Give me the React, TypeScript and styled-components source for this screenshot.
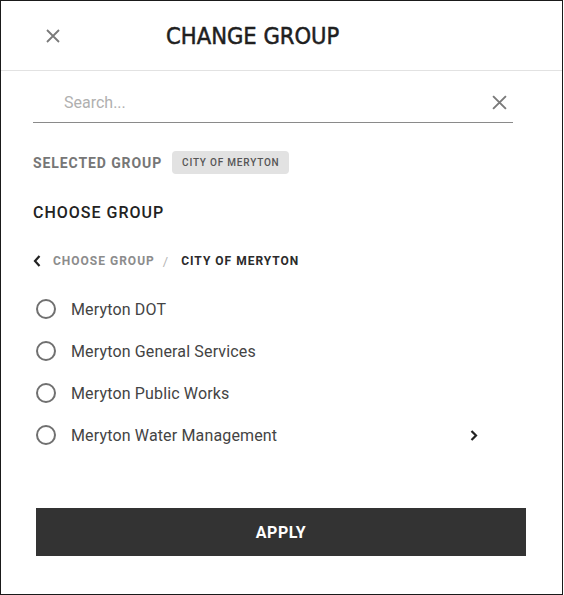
import styled, { createGlobalStyle } from 'styled-components';

const GlobalStyle = createGlobalStyle`
  html, body {
    margin: 0;
    padding: 0;
    background: #ffffff;
  }
  * {
    box-sizing: border-box;
  }
`;

const Frame = styled.div`
  width: 563px;
  height: 595px;
  border: 1px solid #1a1a1a;
  background: #ffffff;
  display: flex;
  flex-direction: column;
  font-family: Roboto, 'Liberation Sans', sans-serif;
`;

const Header = styled.header`
  height: 70px;
  flex-shrink: 0;
  display: flex;
  align-items: center;
  padding-left: 45px;
  border-bottom: 1px solid #e2e2e2;
`;

const IconButton = styled.button`
  display: flex;
  align-items: center;
  justify-content: center;
  padding: 0;
  border: none;
  background: none;
  cursor: pointer;
  color: #7a7a7a;
`;

const Title = styled.h1`
  margin: 0 0 0 106px;
  font-family: 'DejaVu Sans Condensed', 'DejaVu Sans', sans-serif;
  font-size: 23.5px;
  font-weight: 400;
  letter-spacing: 0;
  color: #1f1f1f;
  -webkit-text-stroke: 0.5px #1f1f1f;
`;

const Body = styled.div`
  display: flex;
  flex-direction: column;
  padding: 0 49px 0 32px;
`;

const SearchField = styled.div`
  margin-top: 12px;
  height: 40px;
  display: flex;
  align-items: center;
  border-bottom: 1px solid #8a8a8a;
  padding-right: 6px;
`;

const SearchInput = styled.input`
  flex: 1;
  border: none;
  outline: none;
  background: transparent;
  padding: 0 0 0 31px;
  font-family: Roboto, 'Liberation Sans', sans-serif;
  font-size: 16px;
  color: #333;

  &::placeholder {
    color: #b0b0b0;
  }
`;

const SelectedRow = styled.div`
  margin-top: 28px;
  display: flex;
  align-items: center;
  gap: 10px;
  height: 23px;
`;

const Label = styled.span`
  font-size: 14px;
  font-weight: 700;
  letter-spacing: 0.9px;
  color: #767676;
`;

const Chip = styled.span`
  display: inline-flex;
  align-items: center;
  height: 23px;
  padding: 0 9px 0 10px;
  border-radius: 4px;
  background: #e2e2e2;
  font-size: 10px;
  font-weight: 500;
  letter-spacing: 0.8px;
  color: #555555;
`;

const SectionTitle = styled.h2`
  margin: 29px 0 0;
  font-size: 16px;
  line-height: 20px;
  font-weight: 500;
  letter-spacing: 1px;
  color: #222222;
`;

const Breadcrumb = styled.nav`
  margin-top: 28px;
  height: 20px;
  display: flex;
  align-items: center;
  font-size: 12px;
  font-weight: 700;
  letter-spacing: 1px;
`;

const Crumb = styled.span<{ $current?: boolean }>`
  color: ${(p) => (p.$current ? '#2b2b2b' : '#8c8c8c')};
`;

const Slash = styled.span`
  margin: 0 12px 0 8px;
  font-weight: 400;
  font-size: 13px;
  color: #b5b5b5;
`;

const BackIcon = styled.span`
  display: flex;
  margin-right: 12px;
  color: #222;
`;

const List = styled.ul`
  list-style: none;
  margin: 17px 0 0;
  padding: 0;
`;

const Row = styled.li`
  height: 42px;
  display: flex;
  align-items: center;
  padding-right: 35px;
`;

const Radio = styled.span`
  width: 20px;
  height: 20px;
  margin-left: 3px;
  border: 2px solid #707070;
  border-radius: 50%;
  flex-shrink: 0;
`;

const RowLabel = styled.span`
  flex: 1;
  margin-left: 15px;
  font-size: 16px;
  letter-spacing: 0.15px;
  color: #444444;
`;

const Footer = styled.div`
  margin-top: 52px;
  padding: 0 36px 0 35px;
`;

const ApplyButton = styled.button`
  width: 100%;
  height: 48px;
  border: none;
  background: #333333;
  color: #ffffff;
  font-family: Roboto, 'Liberation Sans', sans-serif;
  font-size: 16px;
  font-weight: 700;
  letter-spacing: 0.5px;
  cursor: pointer;
`;

const groups = [
  { name: 'Meryton DOT' },
  { name: 'Meryton General Services' },
  { name: 'Meryton Public Works' },
  { name: 'Meryton Water Management', children: true },
];

const CloseIcon = ({ size }: { size: number }) => (
  <svg width={size} height={size} viewBox="0 0 14 14" fill="none">
    <path d="M1 1L13 13M13 1L1 13" stroke="currentColor" strokeWidth="1.8" />
  </svg>
);

export default function App() {
  return (
    <>
      <GlobalStyle />
      <Frame>
        <Header>
          <IconButton aria-label="Close">
            <CloseIcon size={14} />
          </IconButton>
          <Title>CHANGE GROUP</Title>
        </Header>
        <Body>
          <SearchField>
            <SearchInput placeholder="Search..." />
            <IconButton aria-label="Clear">
              <CloseIcon size={15} />
            </IconButton>
          </SearchField>
          <SelectedRow>
            <Label>SELECTED GROUP</Label>
            <Chip>CITY OF MERYTON</Chip>
          </SelectedRow>
          <SectionTitle>CHOOSE GROUP</SectionTitle>
          <Breadcrumb>
            <BackIcon>
              <svg width="8" height="12" viewBox="0 0 8 12" fill="none">
                <path d="M6.5 1L2 6L6.5 11" stroke="currentColor" strokeWidth="2.2" />
              </svg>
            </BackIcon>
            <Crumb>CHOOSE GROUP</Crumb>
            <Slash>/</Slash>
            <Crumb $current>CITY OF MERYTON</Crumb>
          </Breadcrumb>
          <List>
            {groups.map((g) => (
              <Row key={g.name}>
                <Radio />
                <RowLabel>{g.name}</RowLabel>
                {g.children && (
                  <svg width="8" height="11" viewBox="0 0 8 11" fill="none">
                    <path d="M1.5 1L6 5.5L1.5 10" stroke="#222" strokeWidth="2.2" />
                  </svg>
                )}
              </Row>
            ))}
          </List>
        </Body>
        <Footer>
          <ApplyButton>APPLY</ApplyButton>
        </Footer>
      </Frame>
    </>
  );
}
